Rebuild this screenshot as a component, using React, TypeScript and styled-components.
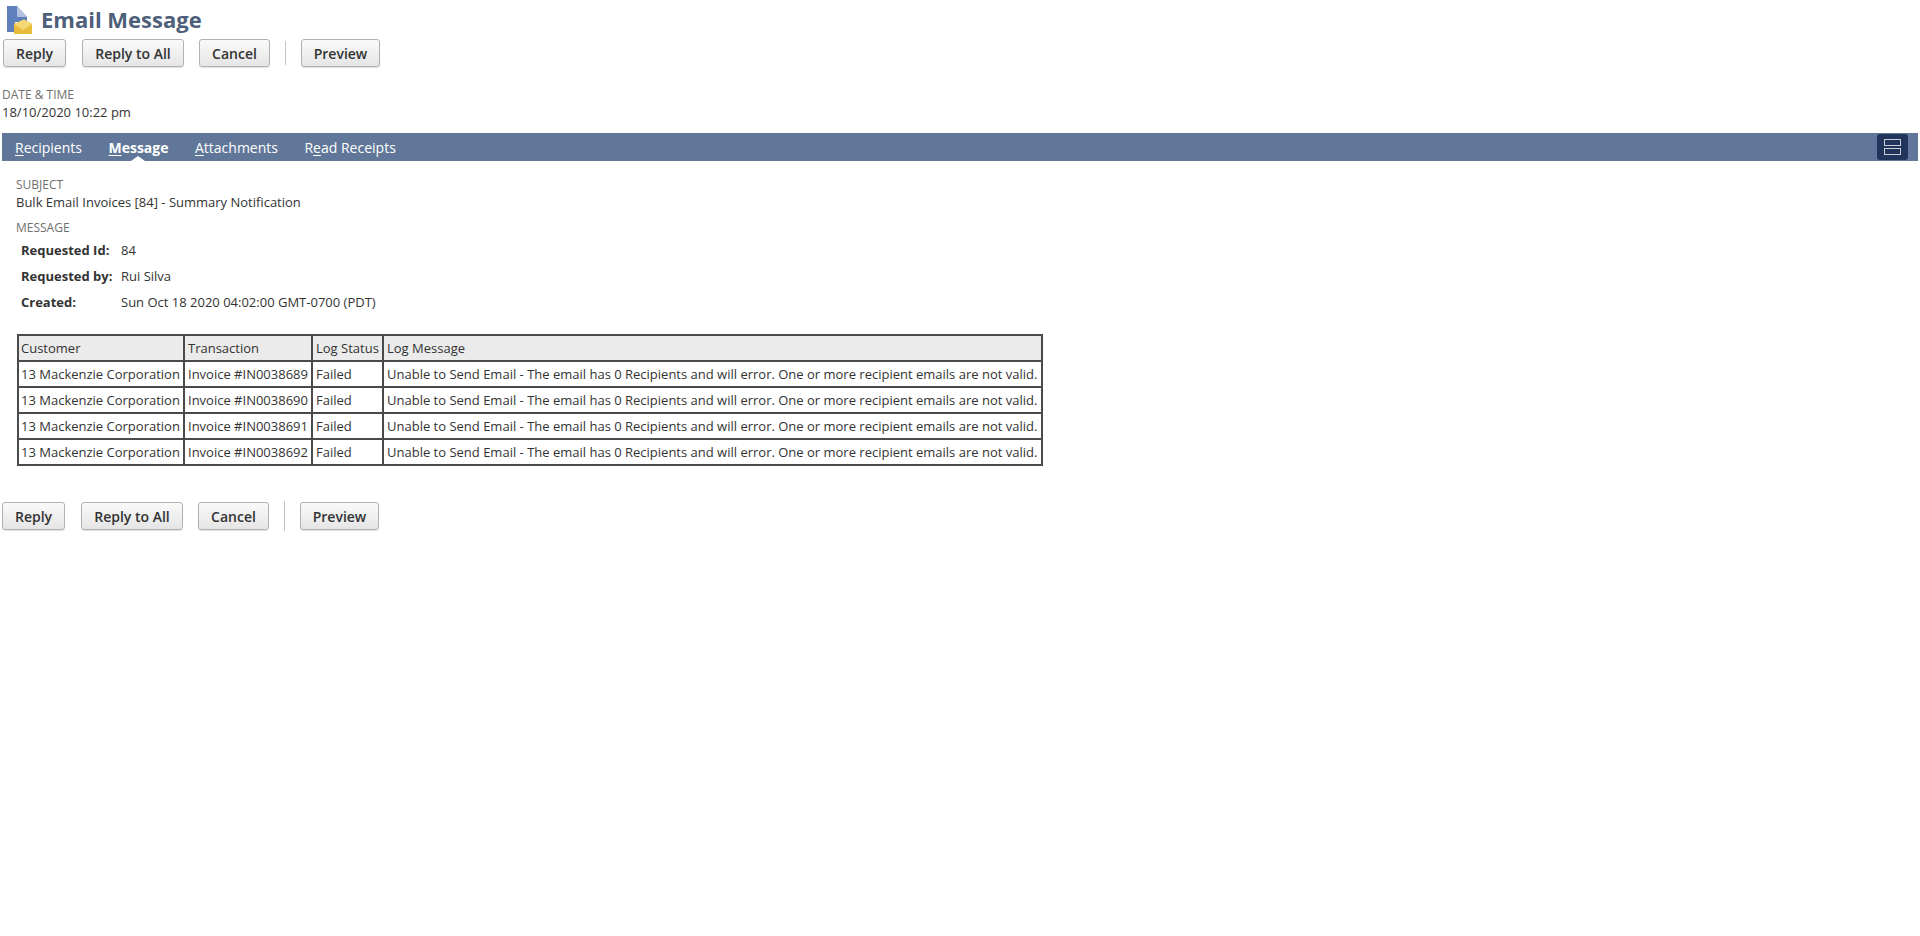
import React from 'react'
import styled, { createGlobalStyle } from 'styled-components'

const GlobalStyle = createGlobalStyle`
  html, body {
    margin: 0;
    padding: 0;
    background: #fff;
    font-family: 'Open Sans', 'Noto Sans', sans-serif;
    color: #333;
  }
`

const Page = styled.div`
  width: 1920px;
  height: 936px;
  overflow: hidden;
`

const TitleRow = styled.div`
  display: flex;
  align-items: center;
  height: 39px;
  padding-left: 7px;
  gap: 9px;
`

const Title = styled.h1`
  margin: 0 0 2px;
  font-size: 22px;
  line-height: 38px;
  font-weight: 700;
  color: #4d5f79;
`

const Toolbar = styled.div<{ $left: number; $top?: number }>`
  display: flex;
  align-items: center;
  height: 28px;
  padding-left: ${({ $left }) => $left}px;
  margin-top: ${({ $top }) => $top ?? 0}px;
`

const ActionButton = styled.button<{ $width: number; $gap: number }>`
  box-sizing: border-box;
  width: ${({ $width }) => $width}px;
  height: 28px;
  margin-right: ${({ $gap }) => $gap}px;
  padding: 0;
  border: 1px solid #b2b2b2;
  border-radius: 3px;
  background: linear-gradient(to bottom, #fafafa, #e5e5e5);
  box-shadow: 0 1px 1px rgba(0, 0, 0, 0.12);
  font-family: inherit;
  font-size: 14px;
  font-weight: 600;
  color: #333;
`

const Divider = styled.div<{ $height: number }>`
  width: 1px;
  height: ${({ $height }) => $height}px;
  margin-right: 15px;
  background: #c4c4c4;
`

const Field = styled.div<{ $left: number }>`
  padding-left: ${({ $left }) => $left}px;
`

const FieldLabel = styled.div`
  font-size: 12px;
  line-height: 17px;
  color: #6f6f6f;
  text-transform: uppercase;
`

const FieldValue = styled.div`
  font-size: 13px;
  line-height: 18px;
  color: #333;
`

const DateBlock = styled.div`
  margin-top: 19px;
`

const TabBar = styled.div`
  display: flex;
  align-items: center;
  justify-content: space-between;
  box-sizing: border-box;
  width: 1916px;
  height: 28px;
  margin: 12px 0 0 2px;
  background: #607799;
`

const Tabs = styled.div`
  display: flex;
  padding-left: 13px;
  gap: 26.5px;
`

const Tab = styled.div<{ $active?: boolean }>`
  position: relative;
  height: 28px;
  font-size: 14px;
  line-height: 30px;
  font-weight: ${({ $active }) => ($active ? 700 : 400)};
  color: #fff;

  u {
    text-underline-offset: 2px;
  }

  ${({ $active }) =>
    $active &&
    `
    &::after {
      content: '';
      position: absolute;
      left: 50%;
      bottom: 0;
      margin-left: -7px;
      border-left: 7px solid transparent;
      border-right: 7px solid transparent;
      border-bottom: 5px solid #fff;
    }
  `}
`

const LayoutToggle = styled.div`
  display: flex;
  align-items: center;
  justify-content: center;
  width: 31px;
  height: 26px;
  margin-right: 10px;
  border-radius: 3px;
  background: #21345c;
`

const TabContent = styled.div`
  padding-top: 15px;
`

const MessageBlock = styled.div`
  margin-top: 8px;
`

const InfoTable = styled.div`
  display: grid;
  grid-template-columns: 100px auto;
  grid-auto-rows: 26px;
  align-items: center;
  padding: 1px 0 0 21px;
  font-size: 13px;
  color: #333;
`

const InfoKey = styled.div`
  font-weight: 700;
`

const LogTable = styled.table`
  border-collapse: collapse;
  margin: 19px 0 0 17px;
  border: 2px solid #4a4a4a;
  font-size: 13px;
  color: #333;
`

const HeadCell = styled.th<{ $width: number }>`
  box-sizing: border-box;
  width: ${({ $width }) => $width}px;
  height: 26px;
  padding: 0 0 0 3px;
  border: 2px solid #4a4a4a;
  background: #ebebeb;
  font-weight: 400;
  text-align: left;
  white-space: nowrap;

  &:first-child {
    padding-left: 2px;
  }
`

const Cell = styled.td`
  box-sizing: border-box;
  height: 26px;
  padding: 0 0 0 3px;
  border: 2px solid #4a4a4a;
  white-space: nowrap;

  &:first-child {
    padding-left: 2px;
  }
`

const PageIcon = () => (
  <svg width="25" height="28" viewBox="0 0 25 28">
    <path d="M0 0H10L20 11V16H8V26H0Z" fill="#5f7fbd" />
    <path d="M10 0L20 11H10Z" fill="#b4c1de" />
    <path d="M7 18L17 13.5L25 18V28H7Z" fill="#e9bd3c" />
    <path d="M7 18L17 13.5L25 18L16 24Z" fill="#f5d873" />
  </svg>
)

const StackIcon = () => (
  <svg width="17" height="16" viewBox="0 0 17 16" fill="none" stroke="#c9ccd4" strokeWidth="1">
    <rect x="0.5" y="0.5" width="16" height="6" />
    <rect x="0.5" y="9.5" width="16" height="6" />
  </svg>
)

const rows = ['0038689', '0038690', '0038691', '0038692']
const logMessage =
  'Unable to Send Email - The email has 0 Recipients and will error. One or more recipient emails are not valid.'

const Actions = ({ left, top, sepHeight }: { left: number; top?: number; sepHeight: number }) => (
  <Toolbar $left={left} $top={top}>
    <ActionButton $width={63} $gap={16}>Reply</ActionButton>
    <ActionButton $width={102} $gap={15}>Reply to All</ActionButton>
    <ActionButton $width={71} $gap={15}>Cancel</ActionButton>
    <Divider $height={sepHeight} />
    <ActionButton $width={79} $gap={0}>Preview</ActionButton>
  </Toolbar>
)

export default function App() {
  return (
    <Page>
      <GlobalStyle />
      <TitleRow>
        <PageIcon />
        <Title>Email Message</Title>
      </TitleRow>
      <Actions left={3} sepHeight={24} />
      <DateBlock>
        <Field $left={2}>
          <FieldLabel>Date &amp; Time</FieldLabel>
          <FieldValue>18/10/2020 10:22 pm</FieldValue>
        </Field>
      </DateBlock>
      <TabBar>
        <Tabs>
          <Tab><u>R</u>ecipients</Tab>
          <Tab $active><u>M</u>essage</Tab>
          <Tab><u>A</u>ttachments</Tab>
          <Tab>R<u>e</u>ad Receipts</Tab>
        </Tabs>
        <LayoutToggle>
          <StackIcon />
        </LayoutToggle>
      </TabBar>
      <TabContent>
        <Field $left={16}>
          <FieldLabel>Subject</FieldLabel>
          <FieldValue>Bulk Email Invoices [84] - Summary Notification</FieldValue>
          <MessageBlock>
            <FieldLabel>Message</FieldLabel>
          </MessageBlock>
        </Field>
        <InfoTable>
          <InfoKey>Requested Id:</InfoKey>
          <div>84</div>
          <InfoKey>Requested by:</InfoKey>
          <div>Rui Silva</div>
          <InfoKey>Created:</InfoKey>
          <div>Sun Oct 18 2020 04:02:00 GMT-0700 (PDT)</div>
        </InfoTable>
        <LogTable>
          <thead>
            <tr>
              <HeadCell $width={166}>Customer</HeadCell>
              <HeadCell $width={128}>Transaction</HeadCell>
              <HeadCell $width={71}>Log Status</HeadCell>
              <HeadCell $width={659}>Log Message</HeadCell>
            </tr>
          </thead>
          <tbody>
            {rows.map((r) => (
              <tr key={r}>
                <Cell>13 Mackenzie Corporation</Cell>
                <Cell>Invoice #IN{r}</Cell>
                <Cell>Failed</Cell>
                <Cell>{logMessage}</Cell>
              </tr>
            ))}
          </tbody>
        </LogTable>
      </TabContent>
      <Actions left={2} top={36} sepHeight={30} />
    </Page>
  )
}
